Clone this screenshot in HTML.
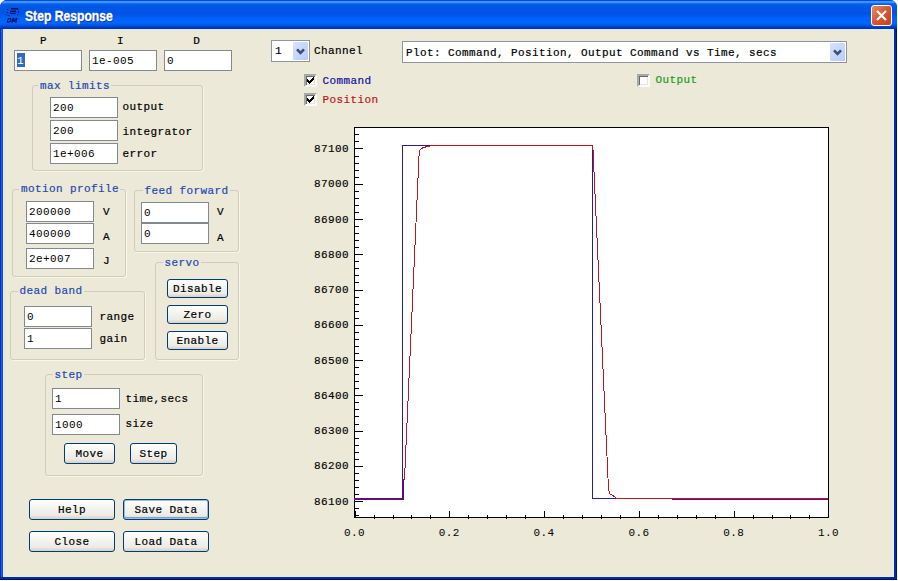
<!DOCTYPE html><html><head><meta charset="utf-8"><style>
*{margin:0;padding:0;box-sizing:content-box}
html,body{width:898px;height:581px;overflow:hidden;background:#fff}
#win{position:absolute;left:0;top:0;width:897px;height:580px;border-radius:7px 7px 0 0;background:#0831C8;overflow:hidden}
#title{position:absolute;left:0;top:0;width:897px;height:29px;background:linear-gradient(#0A48D8 0px,#0A48D8 1px,#3B94FF 1px,#3B94FF 3px,#1A70F0 3px,#0058E6 5px,#0054E3 14px,#0062F8 18px,#0066FF 23px,#0050D8 26px,#0031B8 28px,#0031B8 29px)}
#fl{position:absolute;left:0;top:29px;width:3px;height:551px;background:linear-gradient(90deg,#0030D0 0px,#0030D0 1px,#2A60E8 1px,#2A60E8 2px,#1D4EA8 2px)}
#fr{position:absolute;left:894px;top:29px;width:3px;height:551px;background:linear-gradient(90deg,#0A2A98 0px,#0A2A98 2px,#00106A 2px)}
#fb{position:absolute;left:0;top:577px;width:897px;height:3px;background:linear-gradient(#0A2A98 0px,#0A2A98 2px,#00106A 2px)}
#body{position:absolute;left:3px;top:29px;width:889px;height:546px;background:#ECE9D8;border:1px solid #D8F0FF}
.t{position:absolute;white-space:pre;font-family:'Liberation Mono',monospace;line-height:16px;height:16px}
.ed{position:absolute;border:1px solid #84898F;background:#fff}
.gb{position:absolute;border:1px solid #D0CDBC;border-radius:3px;box-shadow:1px 1px 0 #F7F5EC}
.bt{position:absolute;border:1px solid #003C74;border-radius:3px;background:linear-gradient(#FFFFFF,#F4F4F0 40%,#ECEBE6 80%,#D6D0C5)}
.df{box-shadow:inset 0 0 0 1px #9DB9EB, inset 0 -1px 0 1px #7DA2CE}
.cmb{position:absolute;border:1px solid #8C95A2;background:#fff}
.dd{position:absolute;background:linear-gradient(135deg,#D6E2FD,#B9CCF8);border-radius:1px}
.cb{position:absolute;width:9px;height:9px;border-style:solid;border-width:2px;border-color:#A8A8A4 #FAFAF6 #FAFAF6 #A8A8A4;background:#FBFBF8;box-shadow:inset 1px 1px 0 #6A6A68, inset -1px -1px 0 #E6E4DC}
</style></head><body><div id="win"><div id="title"></div><div id="fl"></div><div id="fr"></div><div id="fb"></div><div id="body"></div><svg style="position:absolute;left:0;top:0" width="30" height="30" fill="#001064"><rect x="11" y="8" width="7" height="1.5"/><rect x="17" y="8" width="1.3" height="2"/><rect x="10" y="10.6" width="6" height="1.4"/><rect x="10.2" y="12.8" width="5.6" height="1.1"/><rect x="18" y="11" width="1" height="1.6"/><rect x="17" y="14.6" width="0.9" height="0.9"/><rect x="7" y="9" width="0.9" height="0.9"/><rect x="7" y="12" width="0.9" height="1"/><rect x="6.3" y="14.5" width="0.9" height="0.9"/><rect x="8.2" y="15" width="1.4" height="0.8"/><path d="M8 18 L10.5 18 Q12 18.5 11.3 20.5 Q10.7 22.8 8.5 22.8 L6.6 22.8 Z M8.6 19.3 L8 21.6 L9.2 21.6 Q10 21.5 10.2 20.4 Q10.3 19.4 9.7 19.3 Z" fill-rule="evenodd"/><path d="M12.4 18 L14 18 L14.5 20 L16 18 L17.6 18 L16.4 22.8 L15.1 22.8 L15.7 20.4 L14.3 22 L13.5 22 L13.2 20.4 L12.5 22.8 L11.3 22.8 Z"/></svg><div style="position:absolute;left:25px;top:7px;font:bold 15px 'Liberation Sans',sans-serif;color:#fff;line-height:18px;transform-origin:0 0;transform:scaleX(0.81);white-space:pre;-webkit-text-stroke:0.35px #fff;text-shadow:1px 1px 0 #0A2480">Step Response</div><div style="position:absolute;left:871px;top:5px;width:19px;height:19px;border:1px solid #fff;border-radius:3px;background:linear-gradient(135deg,#E78B6C,#D8552F 50%,#C2401F)"><svg width="19" height="19" style="position:absolute;left:0;top:0"><path d="M5 5 L14 14 M14 5 L5 14" stroke="#fff" stroke-width="2.2"/></svg></div></div><div class="t" style="left:40.10px;top:33.07px;color:#000;font-size:11px;letter-spacing:0.4px;-webkit-text-stroke:0.2px #000;">P</div>
<div class="t" style="left:117.10px;top:33.07px;color:#000;font-size:11px;letter-spacing:0.4px;-webkit-text-stroke:0.2px #000;">I</div>
<div class="t" style="left:193.20px;top:33.07px;color:#000;font-size:11px;letter-spacing:0.4px;-webkit-text-stroke:0.2px #000;">D</div>
<div class="ed" style="left:14px;top:50px;width:66px;height:19px"></div>
<div style="position:absolute;left:17px;top:53px;width:8px;height:14px;background:#316AC5"></div>
<div class="t" style="left:17.00px;top:53.07px;color:#fff;font-size:11px;letter-spacing:0.4px;">1</div>
<div class="ed" style="left:89px;top:50px;width:66px;height:19px"></div>
<div class="t" style="left:92.00px;top:53.07px;color:#000;font-size:11px;letter-spacing:0.4px;">1e-005</div>
<div class="ed" style="left:164px;top:50px;width:66px;height:19px"></div>
<div class="t" style="left:167.00px;top:53.07px;color:#000;font-size:11px;letter-spacing:0.4px;">0</div>
<div class="gb" style="left:32px;top:85px;width:169px;height:84px"></div>
<div style="position:absolute;left:38px;top:81px;width:73px;height:8px;background:#ECE9D8"></div>
<div class="t" style="left:40.00px;top:78.07px;color:#1E48B0;font-size:11px;letter-spacing:0.4px;-webkit-text-stroke:0.2px #1E48B0;">max limits</div>
<div class="ed" style="left:50px;top:97px;width:66px;height:19px"></div>
<div class="t" style="left:53.00px;top:100.07px;color:#000;font-size:11px;letter-spacing:0.4px;">200</div>
<div class="t" style="left:122.50px;top:99.07px;color:#000;font-size:11px;letter-spacing:0.4px;-webkit-text-stroke:0.2px #000;">output</div>
<div class="ed" style="left:50px;top:120px;width:66px;height:19px"></div>
<div class="t" style="left:53.00px;top:123.07px;color:#000;font-size:11px;letter-spacing:0.4px;">200</div>
<div class="t" style="left:122.50px;top:124.07px;color:#000;font-size:11px;letter-spacing:0.4px;-webkit-text-stroke:0.2px #000;">integrator</div>
<div class="ed" style="left:50px;top:143px;width:66px;height:19px"></div>
<div class="t" style="left:53.00px;top:146.07px;color:#000;font-size:11px;letter-spacing:0.4px;">1e+006</div>
<div class="t" style="left:122.50px;top:146.07px;color:#000;font-size:11px;letter-spacing:0.4px;-webkit-text-stroke:0.2px #000;">error</div>
<div class="gb" style="left:12px;top:189px;width:112px;height:86px"></div>
<div style="position:absolute;left:19px;top:185px;width:101px;height:8px;background:#ECE9D8"></div>
<div class="t" style="left:21.00px;top:181.07px;color:#1E48B0;font-size:11px;letter-spacing:0.4px;-webkit-text-stroke:0.2px #1E48B0;">motion profile</div>
<div class="ed" style="left:26px;top:201px;width:66px;height:19px"></div>
<div class="t" style="left:29.00px;top:204.07px;color:#000;font-size:11px;letter-spacing:0.4px;">200000</div>
<div class="t" style="left:103.00px;top:204.07px;color:#000;font-size:11px;letter-spacing:0.4px;-webkit-text-stroke:0.2px #000;">V</div>
<div class="ed" style="left:26px;top:223px;width:66px;height:19px"></div>
<div class="t" style="left:29.00px;top:226.07px;color:#000;font-size:11px;letter-spacing:0.4px;">400000</div>
<div class="t" style="left:103.00px;top:229.07px;color:#000;font-size:11px;letter-spacing:0.4px;-webkit-text-stroke:0.2px #000;">A</div>
<div class="ed" style="left:26px;top:248px;width:66px;height:19px"></div>
<div class="t" style="left:29.00px;top:251.07px;color:#000;font-size:11px;letter-spacing:0.4px;">2e+007</div>
<div class="t" style="left:103.00px;top:253.07px;color:#000;font-size:11px;letter-spacing:0.4px;-webkit-text-stroke:0.2px #000;">J</div>
<div class="gb" style="left:134px;top:190px;width:103px;height:60px"></div>
<div style="position:absolute;left:142.5px;top:186px;width:87px;height:8px;background:#ECE9D8"></div>
<div class="t" style="left:144.50px;top:183.07px;color:#1E48B0;font-size:11px;letter-spacing:0.4px;-webkit-text-stroke:0.2px #1E48B0;">feed forward</div>
<div class="ed" style="left:141px;top:202px;width:66px;height:19px"></div>
<div class="t" style="left:144.00px;top:205.07px;color:#000;font-size:11px;letter-spacing:0.4px;">0</div>
<div class="t" style="left:217.10px;top:204.07px;color:#000;font-size:11px;letter-spacing:0.4px;-webkit-text-stroke:0.2px #000;">V</div>
<div class="ed" style="left:141px;top:223px;width:66px;height:19px"></div>
<div class="t" style="left:144.00px;top:226.07px;color:#000;font-size:11px;letter-spacing:0.4px;">0</div>
<div class="t" style="left:217.10px;top:230.07px;color:#000;font-size:11px;letter-spacing:0.4px;-webkit-text-stroke:0.2px #000;">A</div>
<div class="gb" style="left:155px;top:262px;width:82px;height:96px"></div>
<div style="position:absolute;left:162.5px;top:258px;width:38px;height:8px;background:#ECE9D8"></div>
<div class="t" style="left:164.50px;top:255.07px;color:#1E48B0;font-size:11px;letter-spacing:0.4px;-webkit-text-stroke:0.2px #1E48B0;">servo</div>
<div class="bt" style="left:167px;top:279px;width:59px;height:17px"></div>
<div class="t" style="left:173.00px;top:281.07px;color:#000;font-size:11px;letter-spacing:0.4px;-webkit-text-stroke:0.2px #000;">Disable</div>
<div class="bt" style="left:167px;top:305px;width:59px;height:17px"></div>
<div class="t" style="left:183.50px;top:307.07px;color:#000;font-size:11px;letter-spacing:0.4px;-webkit-text-stroke:0.2px #000;">Zero</div>
<div class="bt" style="left:167px;top:331px;width:59px;height:17px"></div>
<div class="t" style="left:176.50px;top:333.07px;color:#000;font-size:11px;letter-spacing:0.4px;-webkit-text-stroke:0.2px #000;">Enable</div>
<div class="gb" style="left:10px;top:291px;width:133px;height:67px"></div>
<div style="position:absolute;left:17.5px;top:287px;width:66px;height:8px;background:#ECE9D8"></div>
<div class="t" style="left:19.50px;top:283.07px;color:#1E48B0;font-size:11px;letter-spacing:0.4px;-webkit-text-stroke:0.2px #1E48B0;">dead band</div>
<div class="ed" style="left:24px;top:306px;width:66px;height:19px"></div>
<div class="t" style="left:27.00px;top:309.07px;color:#000;font-size:11px;letter-spacing:0.4px;">0</div>
<div class="t" style="left:99.50px;top:309.07px;color:#000;font-size:11px;letter-spacing:0.4px;-webkit-text-stroke:0.2px #000;">range</div>
<div class="ed" style="left:24px;top:328px;width:66px;height:19px"></div>
<div class="t" style="left:27.00px;top:331.07px;color:#000;font-size:11px;letter-spacing:0.4px;">1</div>
<div class="t" style="left:99.50px;top:331.07px;color:#000;font-size:11px;letter-spacing:0.4px;-webkit-text-stroke:0.2px #000;">gain</div>
<div class="gb" style="left:45px;top:374px;width:156px;height:100px"></div>
<div style="position:absolute;left:52.5px;top:370px;width:31px;height:8px;background:#ECE9D8"></div>
<div class="t" style="left:54.50px;top:367.07px;color:#1E48B0;font-size:11px;letter-spacing:0.4px;-webkit-text-stroke:0.2px #1E48B0;">step</div>
<div class="ed" style="left:52px;top:388px;width:66px;height:19px"></div>
<div class="t" style="left:55.00px;top:391.07px;color:#000;font-size:11px;letter-spacing:0.4px;">1</div>
<div class="t" style="left:125.50px;top:391.07px;color:#000;font-size:11px;letter-spacing:0.4px;-webkit-text-stroke:0.2px #000;">time,secs</div>
<div class="ed" style="left:52px;top:414px;width:66px;height:19px"></div>
<div class="t" style="left:55.00px;top:417.07px;color:#000;font-size:11px;letter-spacing:0.4px;">1000</div>
<div class="t" style="left:125.50px;top:416.07px;color:#000;font-size:11px;letter-spacing:0.4px;-webkit-text-stroke:0.2px #000;">size</div>
<div class="bt" style="left:64px;top:443px;width:49px;height:19px"></div>
<div class="t" style="left:75.50px;top:446.07px;color:#000;font-size:11px;letter-spacing:0.4px;-webkit-text-stroke:0.2px #000;">Move</div>
<div class="bt" style="left:130px;top:443px;width:45px;height:19px"></div>
<div class="t" style="left:139.50px;top:446.07px;color:#000;font-size:11px;letter-spacing:0.4px;-webkit-text-stroke:0.2px #000;">Step</div>
<div class="bt" style="left:29px;top:499px;width:84px;height:19px"></div>
<div class="t" style="left:58.00px;top:502.07px;color:#000;font-size:11px;letter-spacing:0.4px;-webkit-text-stroke:0.2px #000;">Help</div>
<div class="bt df" style="left:123px;top:499px;width:84px;height:19px"></div>
<div class="t" style="left:134.50px;top:502.07px;color:#000;font-size:11px;letter-spacing:0.4px;-webkit-text-stroke:0.2px #000;">Save Data</div>
<div class="bt" style="left:29px;top:531px;width:84px;height:19px"></div>
<div class="t" style="left:54.50px;top:534.07px;color:#000;font-size:11px;letter-spacing:0.4px;-webkit-text-stroke:0.2px #000;">Close</div>
<div class="bt" style="left:123px;top:531px;width:84px;height:19px"></div>
<div class="t" style="left:134.50px;top:534.07px;color:#000;font-size:11px;letter-spacing:0.4px;-webkit-text-stroke:0.2px #000;">Load Data</div>
<div class="cmb" style="left:271px;top:40px;width:37px;height:20px"></div>
<div class="dd" style="left:293px;top:42px;width:15px;height:18px"><svg width="15" height="18" style="position:absolute;left:0;top:0"><path d="M4 7.4 L7.5 10.9 L11 7.4" stroke="#3A4C7C" stroke-width="2.6" fill="none"/></svg></div>
<div class="t" style="left:275.00px;top:43.07px;color:#000;font-size:11px;letter-spacing:0.4px;-webkit-text-stroke:0.2px #000;">1</div>
<div class="t" style="left:314.00px;top:43.07px;color:#000;font-size:11px;letter-spacing:0.4px;-webkit-text-stroke:0.2px #000;">Channel</div>
<div class="cmb" style="left:402px;top:41px;width:443px;height:20px"></div>
<div class="dd" style="left:830px;top:43px;width:15px;height:18px"><svg width="15" height="18" style="position:absolute;left:0;top:0"><path d="M4 7.4 L7.5 10.9 L11 7.4" stroke="#3A4C7C" stroke-width="2.6" fill="none"/></svg></div>
<div class="t" style="left:406.00px;top:45.07px;color:#000;font-size:11px;letter-spacing:0.4px;-webkit-text-stroke:0.2px #000;">Plot: Command, Position, Output Command vs Time, secs</div>
<div class="cb" style="left:304px;top:74px"></div>
<svg style="position:absolute;left:304px;top:74px" width="13" height="13" fill="#000" shape-rendering="crispEdges"><rect x="9" y="3" width="1" height="1"/><rect x="8" y="4" width="2" height="1"/><rect x="3" y="5" width="1" height="1"/><rect x="7" y="5" width="3" height="1"/><rect x="3" y="6" width="2" height="1"/><rect x="6" y="6" width="3" height="1"/><rect x="3" y="7" width="5" height="1"/><rect x="4" y="8" width="3" height="1"/><rect x="5" y="9" width="1" height="1"/></svg>
<div class="t" style="left:322.50px;top:73.07px;color:#1010A0;font-size:11px;letter-spacing:0.4px;-webkit-text-stroke:0.2px #1010A0;">Command</div>
<div class="cb" style="left:304px;top:93px"></div>
<svg style="position:absolute;left:304px;top:93px" width="13" height="13" fill="#000" shape-rendering="crispEdges"><rect x="9" y="3" width="1" height="1"/><rect x="8" y="4" width="2" height="1"/><rect x="3" y="5" width="1" height="1"/><rect x="7" y="5" width="3" height="1"/><rect x="3" y="6" width="2" height="1"/><rect x="6" y="6" width="3" height="1"/><rect x="3" y="7" width="5" height="1"/><rect x="4" y="8" width="3" height="1"/><rect x="5" y="9" width="1" height="1"/></svg>
<div class="t" style="left:322.50px;top:92.07px;color:#B81818;font-size:11px;letter-spacing:0.4px;-webkit-text-stroke:0.2px #B81818;">Position</div>
<div class="cb" style="left:637px;top:74px"></div>
<div class="t" style="left:655.50px;top:72.07px;color:#229A22;font-size:11px;letter-spacing:0.4px;-webkit-text-stroke:0.2px #229A22;">Output</div>
<svg style="position:absolute;left:0;top:0" width="898" height="581" shape-rendering="crispEdges"><rect x="354.5" y="127.5" width="474.0" height="390.0" fill="#fff" stroke="#000" stroke-width="1"/><line x1="354" y1="515.5" x2="358.5" y2="515.5" stroke="#000"/><line x1="354" y1="508.5" x2="358.5" y2="508.5" stroke="#000"/><line x1="354" y1="501.5" x2="362.5" y2="501.5" stroke="#000"/><line x1="354" y1="494.5" x2="358.5" y2="494.5" stroke="#000"/><line x1="354" y1="487.5" x2="358.5" y2="487.5" stroke="#000"/><line x1="354" y1="480.5" x2="358.5" y2="480.5" stroke="#000"/><line x1="354" y1="473.5" x2="358.5" y2="473.5" stroke="#000"/><line x1="354" y1="466.5" x2="362.5" y2="466.5" stroke="#000"/><line x1="354" y1="459.5" x2="358.5" y2="459.5" stroke="#000"/><line x1="354" y1="452.5" x2="358.5" y2="452.5" stroke="#000"/><line x1="354" y1="445.5" x2="358.5" y2="445.5" stroke="#000"/><line x1="354" y1="438.5" x2="358.5" y2="438.5" stroke="#000"/><line x1="354" y1="431.5" x2="362.5" y2="431.5" stroke="#000"/><line x1="354" y1="424.5" x2="358.5" y2="424.5" stroke="#000"/><line x1="354" y1="416.5" x2="358.5" y2="416.5" stroke="#000"/><line x1="354" y1="409.5" x2="358.5" y2="409.5" stroke="#000"/><line x1="354" y1="402.5" x2="358.5" y2="402.5" stroke="#000"/><line x1="354" y1="395.5" x2="362.5" y2="395.5" stroke="#000"/><line x1="354" y1="388.5" x2="358.5" y2="388.5" stroke="#000"/><line x1="354" y1="381.5" x2="358.5" y2="381.5" stroke="#000"/><line x1="354" y1="374.5" x2="358.5" y2="374.5" stroke="#000"/><line x1="354" y1="367.5" x2="358.5" y2="367.5" stroke="#000"/><line x1="354" y1="360.5" x2="362.5" y2="360.5" stroke="#000"/><line x1="354" y1="353.5" x2="358.5" y2="353.5" stroke="#000"/><line x1="354" y1="346.5" x2="358.5" y2="346.5" stroke="#000"/><line x1="354" y1="339.5" x2="358.5" y2="339.5" stroke="#000"/><line x1="354" y1="332.5" x2="358.5" y2="332.5" stroke="#000"/><line x1="354" y1="325.5" x2="362.5" y2="325.5" stroke="#000"/><line x1="354" y1="318.5" x2="358.5" y2="318.5" stroke="#000"/><line x1="354" y1="311.5" x2="358.5" y2="311.5" stroke="#000"/><line x1="354" y1="304.5" x2="358.5" y2="304.5" stroke="#000"/><line x1="354" y1="297.5" x2="358.5" y2="297.5" stroke="#000"/><line x1="354" y1="290.5" x2="362.5" y2="290.5" stroke="#000"/><line x1="354" y1="282.5" x2="358.5" y2="282.5" stroke="#000"/><line x1="354" y1="275.5" x2="358.5" y2="275.5" stroke="#000"/><line x1="354" y1="268.5" x2="358.5" y2="268.5" stroke="#000"/><line x1="354" y1="261.5" x2="358.5" y2="261.5" stroke="#000"/><line x1="354" y1="254.5" x2="362.5" y2="254.5" stroke="#000"/><line x1="354" y1="247.5" x2="358.5" y2="247.5" stroke="#000"/><line x1="354" y1="240.5" x2="358.5" y2="240.5" stroke="#000"/><line x1="354" y1="233.5" x2="358.5" y2="233.5" stroke="#000"/><line x1="354" y1="226.5" x2="358.5" y2="226.5" stroke="#000"/><line x1="354" y1="219.5" x2="362.5" y2="219.5" stroke="#000"/><line x1="354" y1="212.5" x2="358.5" y2="212.5" stroke="#000"/><line x1="354" y1="205.5" x2="358.5" y2="205.5" stroke="#000"/><line x1="354" y1="198.5" x2="358.5" y2="198.5" stroke="#000"/><line x1="354" y1="191.5" x2="358.5" y2="191.5" stroke="#000"/><line x1="354" y1="184.5" x2="362.5" y2="184.5" stroke="#000"/><line x1="354" y1="177.5" x2="358.5" y2="177.5" stroke="#000"/><line x1="354" y1="170.5" x2="358.5" y2="170.5" stroke="#000"/><line x1="354" y1="163.5" x2="358.5" y2="163.5" stroke="#000"/><line x1="354" y1="156.5" x2="358.5" y2="156.5" stroke="#000"/><line x1="354" y1="148.5" x2="362.5" y2="148.5" stroke="#000"/><line x1="354" y1="141.5" x2="358.5" y2="141.5" stroke="#000"/><line x1="354" y1="134.5" x2="358.5" y2="134.5" stroke="#000"/><line x1="354" y1="127.5" x2="358.5" y2="127.5" stroke="#000"/><line x1="355.5" y1="511" x2="355.5" y2="518" stroke="#000"/><line x1="374.5" y1="515" x2="374.5" y2="519" stroke="#000"/><line x1="393.5" y1="515" x2="393.5" y2="519" stroke="#000"/><line x1="411.5" y1="515" x2="411.5" y2="519" stroke="#000"/><line x1="430.5" y1="515" x2="430.5" y2="519" stroke="#000"/><line x1="449.5" y1="511" x2="449.5" y2="518" stroke="#000"/><line x1="468.5" y1="515" x2="468.5" y2="519" stroke="#000"/><line x1="487.5" y1="515" x2="487.5" y2="519" stroke="#000"/><line x1="506.5" y1="515" x2="506.5" y2="519" stroke="#000"/><line x1="525.5" y1="515" x2="525.5" y2="519" stroke="#000"/><line x1="544.5" y1="511" x2="544.5" y2="518" stroke="#000"/><line x1="563.5" y1="515" x2="563.5" y2="519" stroke="#000"/><line x1="582.5" y1="515" x2="582.5" y2="519" stroke="#000"/><line x1="601.5" y1="515" x2="601.5" y2="519" stroke="#000"/><line x1="620.5" y1="515" x2="620.5" y2="519" stroke="#000"/><line x1="639.5" y1="511" x2="639.5" y2="518" stroke="#000"/><line x1="658.5" y1="515" x2="658.5" y2="519" stroke="#000"/><line x1="677.5" y1="515" x2="677.5" y2="519" stroke="#000"/><line x1="696.5" y1="515" x2="696.5" y2="519" stroke="#000"/><line x1="715.5" y1="515" x2="715.5" y2="519" stroke="#000"/><line x1="734.5" y1="511" x2="734.5" y2="518" stroke="#000"/><line x1="753.5" y1="515" x2="753.5" y2="519" stroke="#000"/><line x1="772.5" y1="515" x2="772.5" y2="519" stroke="#000"/><line x1="790.5" y1="515" x2="790.5" y2="519" stroke="#000"/><line x1="809.5" y1="515" x2="809.5" y2="519" stroke="#000"/><line x1="828.5" y1="511" x2="828.5" y2="518" stroke="#000"/><path d="M354 498.5 L402.5 498.5 L402.5 145.5 L592.5 145.5 L592.5 498.5 L828 498.5" stroke="#24209A" stroke-width="1" fill="none" shape-rendering="crispEdges"/><path d="M354 499.5 L403.5 499.5 L403.5 480 L404.5 479 L419 156 L420 150 L423 147.5 L428 146.5 L432 145.5 L592 145.5 L593 150 L608.5 489 L610 494 L613 495.5 L617 498.5 L828 498.5" stroke="#C0141E" stroke-width="1" fill="none"/><rect x="354" y="498" width="50" height="2" fill="#5E0E78"/><rect x="402" y="480" width="2" height="20" fill="#5E0E78"/><rect x="672" y="498" width="156" height="1" fill="#A8143A"/><rect x="672" y="499" width="156" height="1" fill="#6A1470"/></svg>
<div class="t" style="left:314.00px;top:494.07px;color:#000;font-size:11px;letter-spacing:0.4px;-webkit-text-stroke:0.15px #000;">86100</div>
<div class="t" style="left:314.00px;top:458.07px;color:#000;font-size:11px;letter-spacing:0.4px;-webkit-text-stroke:0.15px #000;">86200</div>
<div class="t" style="left:314.00px;top:423.07px;color:#000;font-size:11px;letter-spacing:0.4px;-webkit-text-stroke:0.15px #000;">86300</div>
<div class="t" style="left:314.00px;top:388.07px;color:#000;font-size:11px;letter-spacing:0.4px;-webkit-text-stroke:0.15px #000;">86400</div>
<div class="t" style="left:314.00px;top:353.07px;color:#000;font-size:11px;letter-spacing:0.4px;-webkit-text-stroke:0.15px #000;">86500</div>
<div class="t" style="left:314.00px;top:317.07px;color:#000;font-size:11px;letter-spacing:0.4px;-webkit-text-stroke:0.15px #000;">86600</div>
<div class="t" style="left:314.00px;top:282.07px;color:#000;font-size:11px;letter-spacing:0.4px;-webkit-text-stroke:0.15px #000;">86700</div>
<div class="t" style="left:314.00px;top:247.07px;color:#000;font-size:11px;letter-spacing:0.4px;-webkit-text-stroke:0.15px #000;">86800</div>
<div class="t" style="left:314.00px;top:212.07px;color:#000;font-size:11px;letter-spacing:0.4px;-webkit-text-stroke:0.15px #000;">86900</div>
<div class="t" style="left:314.00px;top:176.07px;color:#000;font-size:11px;letter-spacing:0.4px;-webkit-text-stroke:0.15px #000;">87000</div>
<div class="t" style="left:314.00px;top:141.07px;color:#000;font-size:11px;letter-spacing:0.4px;-webkit-text-stroke:0.15px #000;">87100</div>
<div class="t" style="left:344.10px;top:525.07px;color:#000;font-size:11px;letter-spacing:0.4px;">0.0</div>
<div class="t" style="left:438.86px;top:525.07px;color:#000;font-size:11px;letter-spacing:0.4px;">0.2</div>
<div class="t" style="left:533.62px;top:525.07px;color:#000;font-size:11px;letter-spacing:0.4px;">0.4</div>
<div class="t" style="left:628.38px;top:525.07px;color:#000;font-size:11px;letter-spacing:0.4px;">0.6</div>
<div class="t" style="left:723.14px;top:525.07px;color:#000;font-size:11px;letter-spacing:0.4px;">0.8</div>
<div class="t" style="left:817.90px;top:525.07px;color:#000;font-size:11px;letter-spacing:0.4px;">1.0</div></body></html>
